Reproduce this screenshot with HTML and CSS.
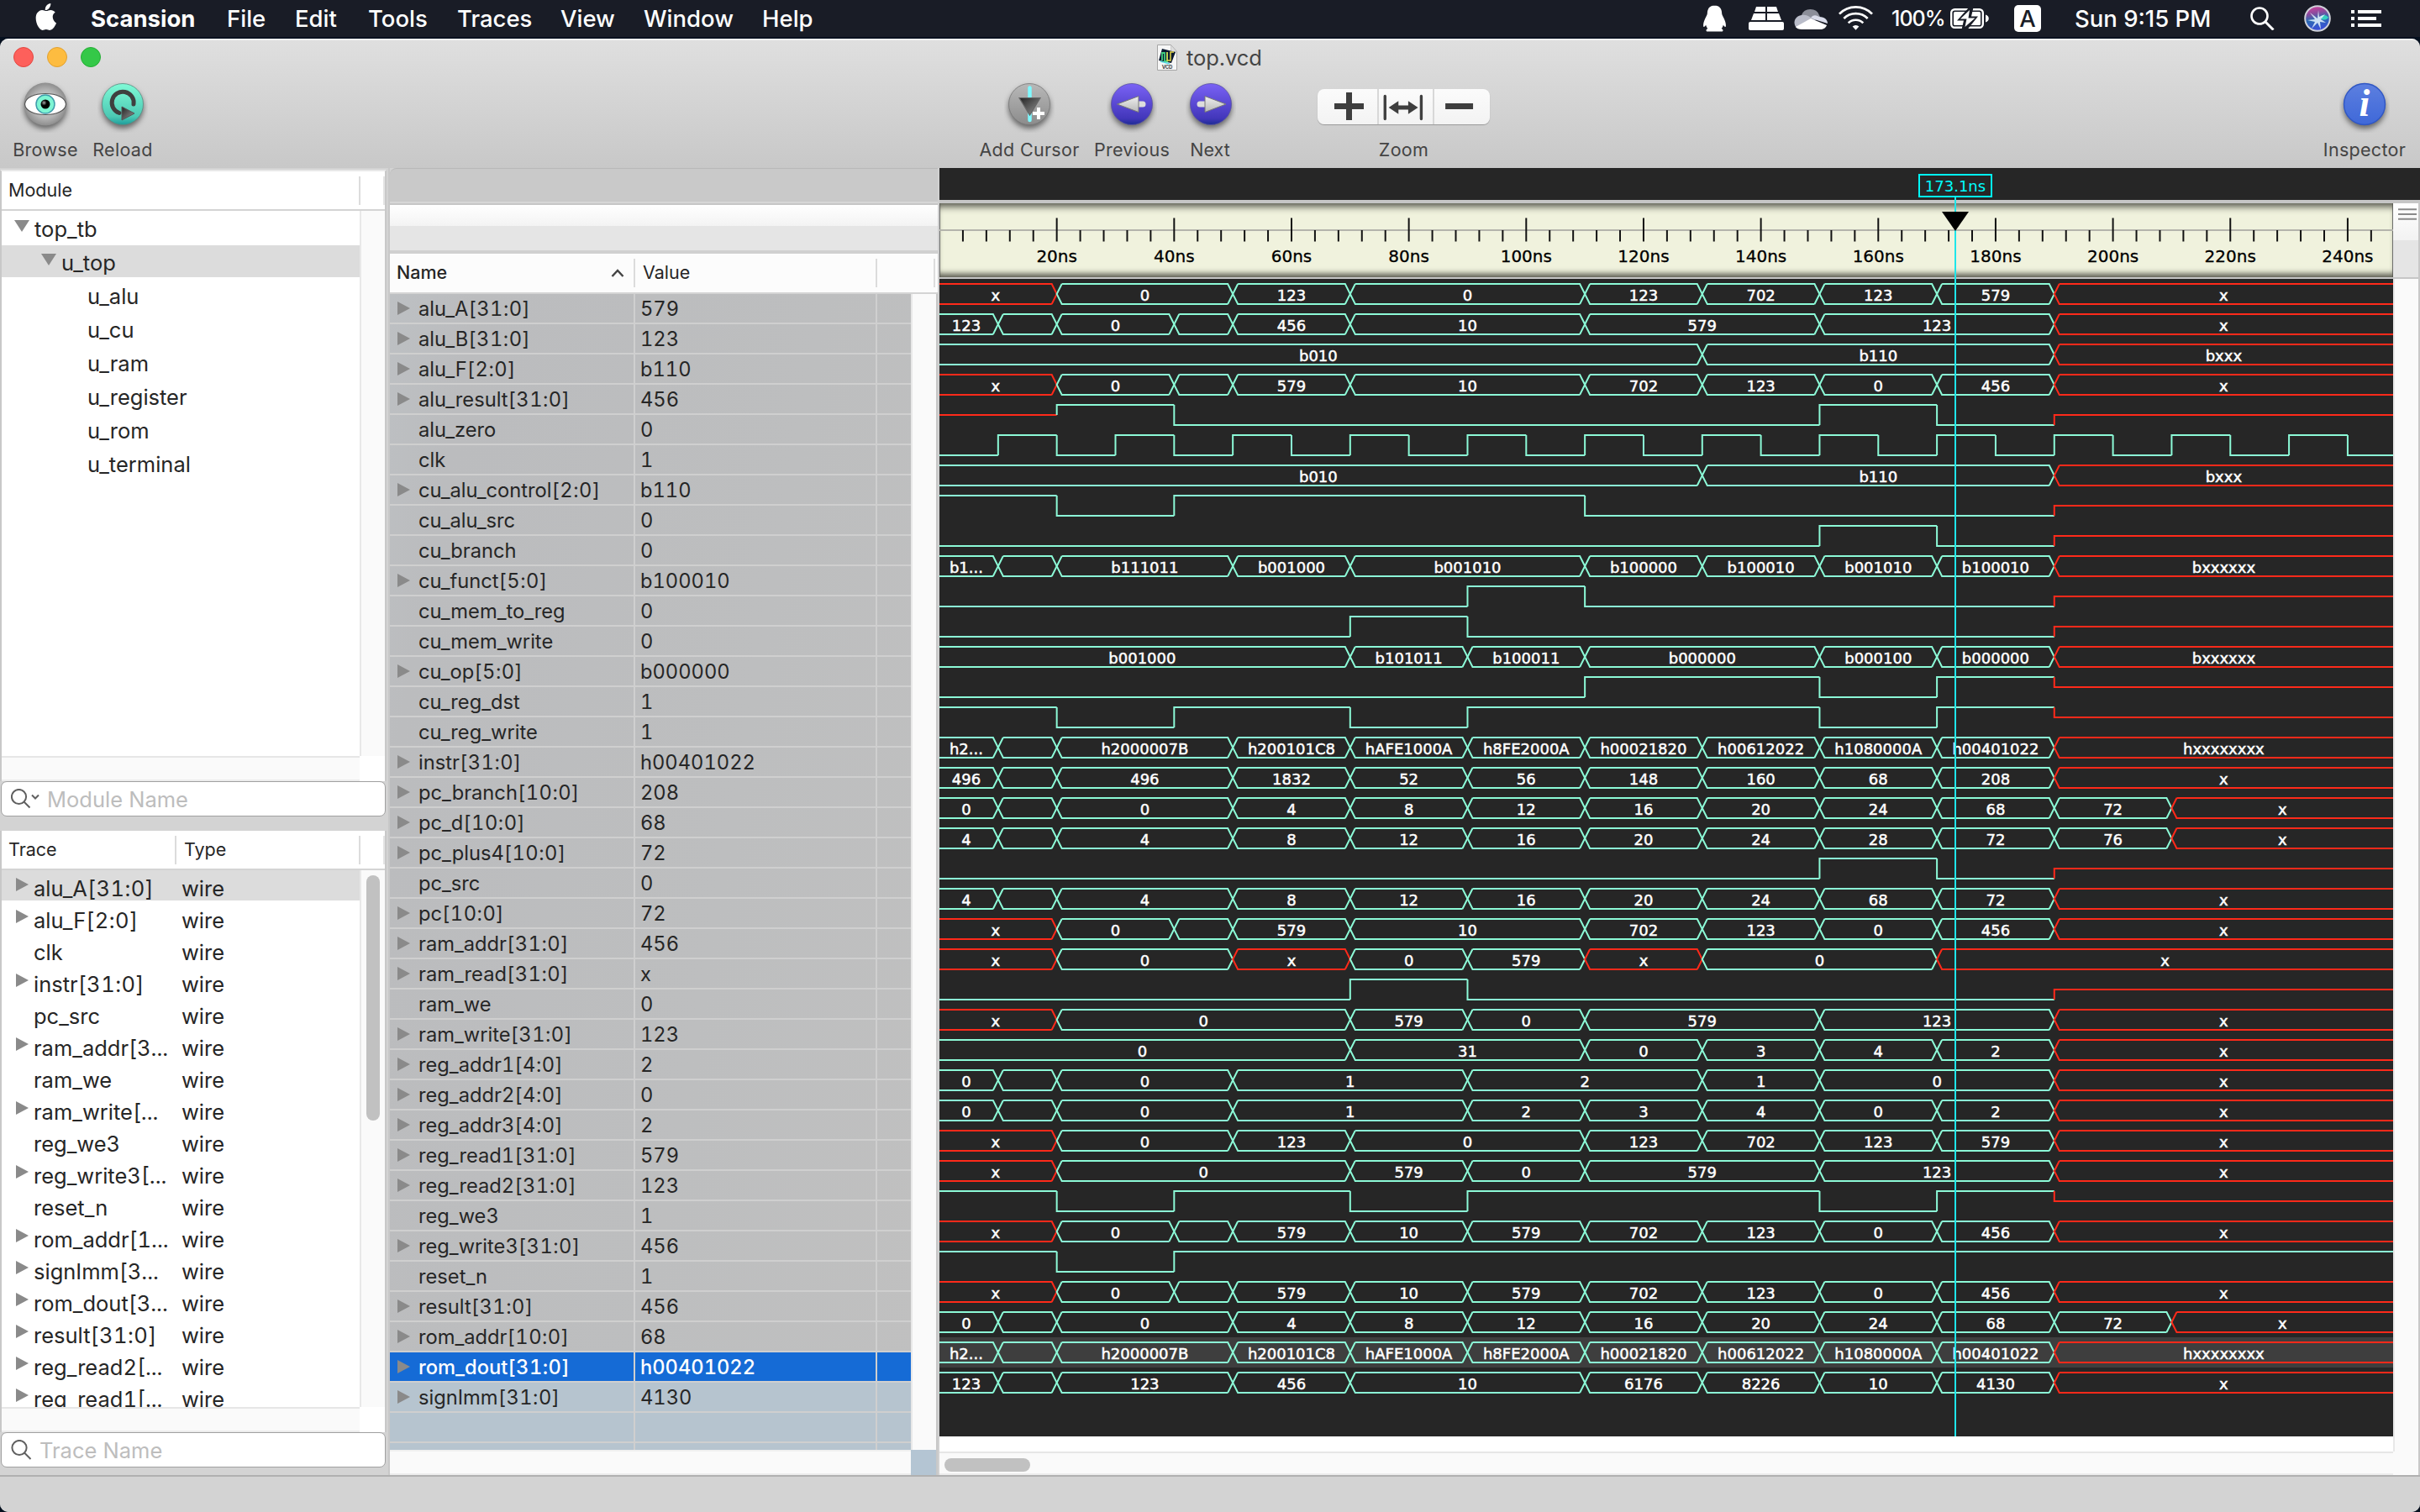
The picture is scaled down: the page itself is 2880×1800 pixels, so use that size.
FILE: index.html
```html
<!DOCTYPE html>
<html lang="en">
<head>
<meta charset="utf-8">
<title>top.vcd</title>
<link rel="stylesheet" href="styles.css">
</head>
<body>
<nav class="menubar">
  <svg class="apple" viewBox="0 0 26 32"><path d="M18.3 0c.3 2.2-.6 4.2-1.8 5.700-1.200 1.400-3 2.400-4.700 2.300-.3-2 .6-4.200 1.700-5.500C14.800 1.100 16.700.1 18.300 0zM25 23.500c-.9 2.100-1.400 3-2.500 4.800-1.600 2.300-3.500 3.600-5.300 3.600-1.700 0-2.200-1-4.300-1s-2.700 1-4.300 1c-1.900 0-3.400-1.600-4.900-3.800C.7 23.500-.6 15.500 2.200 11.600c1.500-2.300 3.700-3.700 5.900-3.700 2.100 0 3.400 1.200 5.100 1.200s2.700-1.200 5.200-1.200c1.900 0 3.900 1 5.300 2.800-4.500 2.600-3.800 9.200 1.300 12.800z"/></svg>
  <span class="menu app-name">Scansion</span>
  <span class="menu m-file">File</span>
  <span class="menu m-edit">Edit</span>
  <span class="menu m-tools">Tools</span>
  <span class="menu m-traces">Traces</span>
  <span class="menu m-view">View</span>
  <span class="menu m-window">Window</span>
  <span class="menu m-help">Help</span>
  <div class="status">
    <svg class="penguin" viewBox="0 0 28 33"><path d="M14 0C8 0 5 4 5 10c-.4 2-1.500 3.500-2.600 6C.6 20-.4 23.500.3 26c.8.8 2-.4 3-2 .4 2 1.200 3.300 2.300 4.500C3.500 29.500 3 31 4.500 32h19c1.500-1 1-2.500-1.100-3.500 1.100-1.200 1.900-2.500 2.300-4.500 1 1.600 2.200 2.800 3 2 .7-2.500-.3-6-2.100-10-1.100-2.500-2.200-4-2.600-6 0-6-3-10-9-10z"/></svg>
    <svg class="bricks" viewBox="0 0 42 28"><path d="M9 0h11v6H7zM22 0h11l2 6H22zM6 8h14v8H3zM22 8h14l3 8H22z"/><rect y="18" width="42" height="10" rx="2"/></svg>
    <svg class="cloud" viewBox="0 0 40 26"><path d="M9 9a11 10 0 0 1 21 0l1 2-12 8z" fill="#8b8e99"/><path d="M9 9c4-.5 7 0 11 3l4 3L3 24C-1 20-1 11 9 9z" fill="#b9bcc9"/><path d="M20 12c4-5 8-2 10-1 7 0 10 4 10 8L24 14z" fill="#d9dcea"/><path d="M2 23l18-10 19 8c-1 3-4 5-8 5H9c-3 0-6-1-7-3z" fill="#fff"/></svg>
    <svg class="wifi" viewBox="0 0 42 29"><g fill="none" stroke="#fff" stroke-width="2.800"><path d="M1 9.500a28 28 0 0 1 40 0M6.500 15a20.500 20.500 0 0 1 29 0M12 20.500a12.800 12.800 0 0 1 18 0"/></g><path d="M21 29l-4-4.200a5.800 5.800 0 0 1 8 0z"/></svg>
    <span class="percent">100%</span>
    <svg class="battery" viewBox="0 0 46 24"><rect x="1.200" y="1.200" width="37.600" height="21.600" rx="4" fill="none" stroke="#fff" stroke-width="2.400"/><rect x="4" y="4" width="32" height="16" rx="1.500"/><path d="M42 7.500c5 1 5 8 0 9z"/><path d="M22 -1L8 14.500h8L13.500 25h7L33 9.500h-8L27.500 -1z" fill="#191c26"/><path d="M23 2L12 12.500h7.500L17.500 22 29.500 11.500h-8z"/></svg>
    <span class="input-source">A</span>
    <span class="clock">Sun 9:15 PM</span>
    <svg class="spotlight" viewBox="0 0 30 28"><circle cx="11" cy="11" r="9.500" fill="none" stroke="#fff" stroke-width="2.600"/><path d="M18 18l9.500 9.500" stroke="#fff" stroke-width="3"/></svg>
    <svg class="siri" viewBox="0 0 32 32">
      <defs><linearGradient id="siriFill" x1="0" y1="0" x2="0.200" y2="1"><stop offset="0" stop-color="#e0409a"/><stop offset=".35" stop-color="#8a4a9e"/><stop offset=".6" stop-color="#2a6ab0"/><stop offset="1" stop-color="#3a4fd8"/></linearGradient></defs>
      <circle cx="16" cy="16" r="14.800" fill="url(#siriFill)" stroke="#cfd2da" stroke-width="2"/>
      <path d="M20 13c4-2 7-1 9 2-3 3-5 3-8 2z" fill="#35d0c0"/><path d="M16 16L7 9l6 8-9 1 9 2-4 8 7-7 4 8-1-9 7 1-6-4 5-6-7 3-1-8z" fill="#e6f6ff" opacity=".85"/>
    </svg>
    <svg class="list" viewBox="0 0 36 20"><path d="M0 0h4v4H0zM0 8h4v4H0zM0 16h4v4H0zM8 0h28v4H8zM8 8h22v4H8zM8 16h28v4H8z"/></svg>
  </div>
</nav>

<main class="window">
  <header class="toolbar">
    <div class="titlebar">
      <i class="light close"></i><i class="light minimize"></i><i class="light maximize"></i>
      <div class="title">
        <svg class="doc" viewBox="0 0 24 31"><path d="M.5.500h16l7 8v22H.5z" fill="#f6f6f6" stroke="#a5a5a5"/><path d="M16.500.500v8h7z" fill="#ddd" stroke="#b5b5b5" stroke-width=".6"/><path d="M6 5l16 4-5 13L2 19z" fill="#0c1a30"/><path d="M6 19V10h3v10h3V9" fill="none" stroke="#40d080" stroke-width="1.800"/><path d="M12 9v10h4V9h4" fill="none" stroke="#e6d84a" stroke-width="1.500"/><path d="M4 20l11 3" stroke="#58d8e0" stroke-width="1.500"/><text x="12" y="29" font-size="6" text-anchor="middle" font-family="Inter" font-weight="700" fill="#444">VCD</text></svg>
        <span>top.vcd</span>
      </div>
    </div>
    <div class="tools">
      <div class="tool t-browse">
        <svg viewBox="0 0 60 64"><defs><radialGradient id="lid" cx=".5" cy=".5" r=".55"><stop offset="0" stop-color="#ddd"/><stop offset=".6" stop-color="#b4b4b4"/><stop offset="1" stop-color="#828282"/></radialGradient><radialGradient id="pupil" cx=".35" cy=".35" r=".6"><stop offset="0" stop-color="#aaa"/><stop offset=".5" stop-color="#000"/></radialGradient></defs>
          <circle class="drop" cx="30" cy="30" r="25.500" fill="url(#lid)"/><path d="M5.500 30C6 22 17 17.500 30 17.500S54 22 54.500 30C54 38 43 42.500 30 42.500S6 38 5.500 30z" fill="#fff" stroke="#555" stroke-width="1.200"/><circle cx="30" cy="30" r="11" fill="#7ef5d3" stroke="#3f9cab" stroke-width="1.500"/><circle cx="30" cy="30" r="5.500" fill="url(#pupil)"/></svg>
        <span>Browse</span></div>
      <div class="tool t-reload">
        <svg viewBox="0 0 60 64"><defs><linearGradient id="mint" x1="0" y1="0" x2="0" y2="1"><stop offset="0" stop-color="#80fad6"/><stop offset=".8" stop-color="#4cc9b4"/><stop offset="1" stop-color="#1d9d9c"/></linearGradient><linearGradient id="dark" x1="0" y1="0" x2="1" y2="1"><stop offset="0" stop-color="#222"/><stop offset="1" stop-color="#999"/></linearGradient></defs>
          <circle class="drop" cx="30" cy="30" r="24.500" fill="url(#mint)" stroke="#5a8a80" stroke-width=".8"/><path d="M43 30A13 13 0 1 0 26 40.500" fill="none" stroke="#3f3f3f" stroke-width="5" stroke-linecap="round"/><path d="M29 33v16l15-8z" fill="url(#dark)" stroke="#555"/></svg>
        <span>Reload</span></div>
      <div class="tool t-cursor">
        <svg viewBox="0 0 60 64"><defs><linearGradient id="steel" x1="0" y1="0" x2="0" y2="1"><stop offset="0" stop-color="#b8b8b8"/><stop offset="1" stop-color="#8c8c8c"/></linearGradient></defs><circle class="drop" cx="30" cy="30" r="24.500" fill="url(#steel)" stroke="#777" stroke-width=".8"/><path d="M30.500 10.500v38.500" stroke="#7ef9ff" stroke-width="4.500" stroke-linecap="round"/><path d="M18 22.500h25L30.500 43z" fill="url(#dark)" stroke="#666" stroke-width="1.200"/><path d="M34 41h14M41 34v14" stroke="#fff" stroke-width="4"/></svg>
        <span>Add Cursor</span></div>
      <div class="tool t-prev">
        <svg viewBox="0 0 60 64"><defs><linearGradient id="violet" x1="0" y1="0" x2="0" y2="1"><stop offset="0" stop-color="#7a62f5"/><stop offset=".85" stop-color="#4236ba"/><stop offset="1" stop-color="#1c2c94"/></linearGradient><linearGradient id="chrome" x1="0" y1="0" x2="0" y2="1"><stop offset="0" stop-color="#efefef"/><stop offset="1" stop-color="#b8b8b8"/></linearGradient></defs><circle class="drop" cx="30" cy="30" r="24.500" fill="url(#violet)" stroke="#5a54a0" stroke-width=".8"/><path d="M37 26.500h6a3.500 3.500 0 0 1 0 7h-6z" fill="#ddd"/><path d="M12.500 30L38 20.500v19z" fill="url(#chrome)" stroke="#777"/></svg>
        <span>Previous</span></div>
      <div class="tool t-next">
        <svg viewBox="0 0 60 64"><circle class="drop" cx="30" cy="30" r="24.500" fill="url(#violet)" stroke="#5a54a0" stroke-width=".8"/><path d="M23 26.500h-6a3.500 3.500 0 0 0 0 7h6z" fill="#ddd"/><path d="M48 30L23 20.500v19z" fill="url(#chrome)" stroke="#777"/></svg>
        <span>Next</span></div>
      <div class="tool t-zoom">
        <div class="segments">
          <svg viewBox="0 0 71 42"><path d="M20 17h14V4h7v13h14v7H41v13h-7V24H20z" fill="#3e3e3e"/></svg>
          <svg viewBox="0 0 66 42"><path d="M7.500 8v28M52 8v28" stroke="#404040" stroke-width="3.500" stroke-linecap="round"/><path d="M12 22l12-8v5.500h12V14l12 8-12 8v-5.500H24V30z" fill="#3e3e3e"/></svg>
          <svg viewBox="0 0 66 42"><path d="M13.500 17h34v7h-34z" fill="#3e3e3e"/></svg>
        </div>
        <span>Zoom</span></div>
      <div class="tool t-inspector">
        <svg viewBox="0 0 60 64"><defs><linearGradient id="azure" x1="0" y1="0" x2="0" y2="1"><stop offset="0" stop-color="#5c7fe0"/><stop offset="1" stop-color="#3f68d8"/></linearGradient></defs><circle class="drop" cx="30" cy="30" r="24.500" fill="url(#azure)" stroke="#2f56c4" stroke-width="1.400"/><text x="30" y="44" text-anchor="middle" font-family="Liberation Serif, serif" font-style="italic" font-weight="700" font-size="46" fill="#fff">i</text></svg>
        <span>Inspector</span></div>
    </div>
  </header>

  <div class="panes">
    <aside class="sidebar">
      <section class="box module-box">
        <div class="thead"><span class="th th-module">Module</span><span class="th th-end"></span></div>
        <div class="scroll-area">
          <ul class="tree">
            <li class="lvl0"><i class="tri down"></i>top_tb</li>
            <li class="lvl1 current"><i class="tri down"></i>u_top</li>
            <li class="lvl2">u_alu</li><li class="lvl2">u_cu</li><li class="lvl2">u_ram</li>
            <li class="lvl2">u_register</li><li class="lvl2">u_rom</li><li class="lvl2">u_terminal</li>
          </ul>
          <div class="vtrack"></div>
          <div class="htrack"></div><div class="corner"></div>
        </div>
      </section>
      <div class="search"><svg class="lens with-menu" viewBox="0 0 34 24"><circle cx="9.500" cy="9.500" r="8.600"/><path d="M15.500 15.500l7 7M25 7.500l4 4 4-4"/></svg>Module Name</div>
      <section class="box trace-box">
        <div class="thead"><span class="th th-trace">Trace</span><span class="th th-type">Type</span><span class="th th-end"></span></div>
        <div class="scroll-area">
          <ul class="traces" id="traces"></ul>
          <div class="vtrack"><i class="vthumb"></i></div>
          <div class="htrack"></div><div class="corner"></div>
        </div>
      </section>
      <div class="search"><svg class="lens" viewBox="0 0 25 24"><circle cx="10" cy="9.500" r="8.600"/><path d="M16 15.500l7.500 7.500"/></svg>Trace Name</div>
    </aside>

    <section class="signals">
      <div class="blank-head"></div>
      <div class="white-strip"></div>
      <div class="grey-strip"></div>
      <div class="thead"><span class="th th-name">Name<svg class="sort" viewBox="0 0 16 10"><path d="M1.500 9L8 2l6.500 7"/></svg></span><span class="th th-value">Value</span><span class="th th-rest"></span><span class="th th-end"></span></div>
      <div class="scroll-area">
        <div class="sig-rows" id="signals"></div>
        <div class="vtrack"></div>
        <div class="htrack"></div><div class="corner"></div>
      </div>
    </section>

    <section class="waves">
      <div class="cursor-bar"></div>
      <div class="ruler-row">
        <svg class="ruler" id="ruler" viewBox="0 0 1730 88"></svg>
        <div class="ruler-side"><svg viewBox="0 0 22 14"><path d="M0 1.200h22M0 7h22M0 12.800h22" stroke="#8a8a8a" stroke-width="2"/></svg></div>
      </div>
      <div class="wave-body">
        <svg class="plot" id="plot" viewBox="0 0 1730 1378"></svg>
        <div class="vtrack"></div>
        <div class="plot-foot"></div>
        <div class="htrack"><i class="hthumb"></i></div><div class="corner"></div>
      </div>
      <div class="cursor">
        <span class="cursor-label">173.1ns</span>
        <svg class="cursor-mark" viewBox="0 0 32 24"><path d="M0 0h32L16 23z"/></svg>
      </div>
    </section>
  </div>
  <footer class="statusbar"></footer>
</main>
<script src="waves.js"></script>
</body>
</html>
```
FILE: styles.css
```css
* { box-sizing: border-box; margin: 0; padding: 0; }
html, body { width: 2880px; height: 1800px; overflow: hidden; }
body { background: #06101f; font-family: Inter, "Liberation Sans", sans-serif; color: #262626; display: flex; flex-direction: column; }
ul { list-style: none; }
svg { display: block; flex: none; }
i { display: block; }

/* Menu bar */
.menubar { height: 44px; flex: none; background: #191c26; color: #fff; display: flex; align-items: center; padding-left: 42px; margin-bottom: 2px; font-size: 27.5px; font-weight: 500; line-height: 44px; position: relative; }
.menubar svg { fill: #fff; }
.apple { width: 26px; height: 32px; margin-top: -4px; margin-right: 40px; }
.menu { flex: none; white-space: nowrap; }
.app-name { width: 162px; font-weight: 700; }
.m-file { width: 81px; }
.m-edit { width: 87px; }
.m-tools { width: 106px; }
.m-traces { width: 123px; }
.m-view { width: 99px; }
.m-window { width: 141px; }
.status { display: flex; align-items: center; margin-left: auto; padding-right: 46px; }
.penguin { width: 27px; height: 33px; margin-right: 27px; }
.bricks { width: 42px; height: 28px; margin-right: 12px; }
.cloud { width: 40px; height: 26px; margin-right: 13px; }
.wifi { width: 41px; height: 29px; margin-right: 22px; margin-top: -2px; }
.percent { width: 70px; font-size: 25px; letter-spacing: -1px; }
.battery { width: 46px; height: 24px; margin-right: 30px; }
.input-source { width: 32px; height: 32px; border-radius: 5px; background: #fff; color: #191c26; text-align: center; line-height: 32px; margin-right: 40px; }
.clock { width: 209px; white-space: nowrap; }
.spotlight { width: 30px; height: 28px; margin-right: 34px; }
.siri { width: 32px; height: 32px; margin-right: 24px; }
.list { width: 36px; height: 20px; }

/* Window */
.window { flex: 1; display: flex; flex-direction: column; min-height: 0; border-radius: 10px; overflow: hidden; background: #d3d3d3; }
.toolbar { height: 154px; flex: none; background: linear-gradient(#dfdfdf, #c8c8c8); border-top: 2px solid #f0f0f0; display: flex; flex-direction: column; color: #444; }
.titlebar { height: 40px; display: flex; align-items: center; padding-left: 16px; }
.light { width: 24px; height: 24px; border-radius: 50%; margin-right: 16px; border: 1px solid; }
.close { background: #fd605b; border-color: #e24640; }
.minimize { background: #fdbc40; border-color: #e0a030; }
.maximize { background: #34c848; border-color: #25ad35; }
.title { display: flex; align-items: center; margin-left: 1241px; font-size: 25.5px; line-height: 40px; gap: 11px; padding-top: 1px; letter-spacing: -.1px; }
.doc { width: 24px; height: 31px; margin-top: -1px; }
.tools { display: flex; flex: 1; padding-left: 15px; }
.tool { display: flex; flex-direction: column; align-items: center; flex: none; padding-top: 6px; font-size: 21.5px; white-space: nowrap; }
.tool > svg { width: 60px; height: 64px; }
.tool > span { line-height: 28px; margin-top: 6px; letter-spacing: .3px; }
.drop { filter: drop-shadow(0 4px 3px rgba(0, 0, 0, .5)); }
.t-browse { width: 78px; margin-right: 17px; }
.t-reload { width: 72px; margin-right: 984px; }
.t-cursor { width: 118px; margin-right: 18px; }
.t-prev { width: 90px; margin-right: 24px; }
.t-next { width: 50px; margin-right: 102px; }
.t-next > span { letter-spacing: 0; margin-left: -2px; }
.t-zoom { width: 205px; }
.t-inspector { width: 100px; margin-left: auto; margin-right: 16px; }
.segments { display: flex; width: 205px; height: 42px; margin: 12px 0 10px; border-radius: 8px; background: linear-gradient(#fbfbfb, #f3f3f3); box-shadow: 0 1px 1px #9a9a9a; }
.segments svg { height: 42px; width: 66px; border-left: 2px solid #d8d8d8; }
.segments svg:first-child { width: 71px; border: 0; }
.panes { display: flex; height: 1558px; flex: none; border-bottom: 2px solid #b0b0b0; }
.statusbar { flex: 1; background: #d3d3d3; }

/* Shared table pieces */
.thead { display: flex; background: #fff; height: 47px; flex: none; border-bottom: 2px solid #d4d4d4; font-size: 21.5px; line-height: 44px; }
.th { position: relative; height: 34px; margin-top: 6px; border-right: 2px solid #dcdcdc; line-height: 33px; flex: none; }
.th-end { flex: 1; border-color: #e4e4e4; }
.scroll-area { flex: 1; min-height: 0; display: grid; grid-template-columns: 1fr 30px; grid-template-rows: 1fr 30px; }
.vtrack { background: #fafafa; border-left: 2px solid #e8e8e8; }
.htrack { background: #fafafa; border-top: 2px solid #e6e6e6; border-bottom: 2px solid #ececec; }
.corner { background: #fff; }
.tri { width: 0; height: 0; flex: none; border: solid transparent; }
.tri.down { border-width: 14px 9px 0; border-top-color: #8a8a8a; }
.tri.right { border-width: 8.5px 0 8.5px 15px; border-left-color: #8a8a8a; }

/* Sidebar */
.sidebar { width: 462px; flex: none; background: #d3d3d3; padding-top: 2px; display: flex; flex-direction: column; }
.box { width: 460px; border-left: 2px solid #c8c8c8; border-right: 2px solid #c8c8c8; display: flex; flex-direction: column; }
.module-box { height: 728px; background: #fff; border-top: 2px solid #e8e8e8; }
.trace-box { height: 716px; background: #fff; margin-top: 17px; }
.th-module { width: 427px; padding-left: 8px; }
.th-trace { width: 208px; padding-left: 8px; }
.th-type { width: 219px; padding-left: 9px; }
.tree, .traces { overflow: hidden; min-height: 0; font-size: 25.5px; }
.tree { padding-top: 1px; }
.tree li { height: 40px; line-height: 42px; display: flex; background-clip: padding-box; border-bottom: 2px solid transparent; }
.tree .tri { margin-top: 10px; margin-right: 6px; }
.tree .current { background-color: #dcdcdc; }
.lvl0 { padding-left: 15px; }
.lvl1 { padding-left: 47px; }
.lvl2 { padding-left: 102px; }
.traces { font-feature-settings: "tnum"; }
.traces li { height: 38px; line-height: 43px; display: flex; background-clip: padding-box; border-bottom: 2px solid transparent; }
.traces li:first-child { background-color: #dcdcdc; }
.traces .mark { width: 21px; margin-left: 17px; padding-top: 9px; flex: none; }
.traces .nm { width: 176px; white-space: nowrap; flex: none; }
.vtrack .vthumb { width: 16px; height: 292px; margin: 6px 0 0 6px; border-radius: 8px; background: #c1c1c1; }
.search { height: 42px; width: 458px; margin-left: 1px; flex: none; background: #fff; border: 1.500px solid #a0a0a0; border-radius: 7px; display: flex; align-items: center; color: #bdbdbd; font-size: 25.5px; padding-left: 11px; }
.lens { width: 25px; height: 24px; fill: none; stroke: #606060; stroke-width: 2; margin-right: 9px; }
.lens.with-menu { width: 34px; }

/* Signal list */
.signals { width: 656px; flex: none; border-left: 2px solid #c8c8c8; border-right: 2px solid #d0d0d0; display: flex; flex-direction: column; }
.signals .thead { background: #fcfcfc; height: 48px; }
.blank-head { height: 44px; background: #c9c9c9; border-top: 1px solid #b8b8b8; border-bottom: 2px solid #c6c6c6; box-shadow: inset 0 -2px #d6d6d6; flex: none; border-top-left-radius: 8px; }
.white-strip { height: 25px; background: linear-gradient(#fff, #f3f3f3); flex: none; }
.grey-strip { height: 33px; background: #e5e5e5; border-bottom: 4px solid #d0d0d0; flex: none; }
.th-name { width: 292px; padding-left: 8px; font-weight: 500; }
.th-value { width: 288px; padding-left: 9px; }
.th-rest { width: 69px; }
.signals .th-end { border: 0; }
.signals .scroll-area { grid-template-columns: 1fr 32px; }
.signals .vtrack, .signals .corner { border-right: 2px solid #c8c8c8; }
.sort { width: 16px; height: 10px; fill: none; stroke: #444; stroke-width: 2.500; position: absolute; right: 11px; top: 12px; }
.sig-rows { overflow: hidden; min-height: 0; font-size: 23.700px; line-height: 35px; background: linear-gradient(100deg, #bdc0c3 0, #bbbcbe 12%, #bdbebf 60%, #c0c0c0 100%); font-feature-settings: "tnum"; }
.sig { height: 36px; display: grid; grid-template-columns: 292px 288px 1fr; border-bottom: 2px solid #cfcfcf; }
.sig > span { border-right: 2px solid #cfcfcf; white-space: nowrap; display: flex; }
.sig > span:last-child { border: 0; }
.sig .mark { width: 25px; margin-left: 9px; padding-top: 9px; flex: none; }
.sig .val { padding-left: 6px; }
.bits { letter-spacing: .5px; }
.sig.cool { background: #b6c4cf; }
.sig.active { background: #156bd6; color: #fff; font-weight: 500; }
.signals .corner { background: #b4c5d3; }
.signals .htrack { border-top-color: #f0f0f0; }

/* Waveforms */
.waves { flex: 1; min-width: 0; display: flex; flex-direction: column; border-right: 2px solid #c8c8c8; position: relative; }
.cursor-bar { height: 38px; flex: none; background: #262626; margin-right: -2px; }
.ruler-row { height: 94px; flex: none; border-top: 4px solid #c6c6c6; border-bottom: 2px solid #c6c6c6; display: grid; grid-template-columns: 1730px 1fr; }
.ruler { width: 1730px; height: 88px; background: #f0f2dd; box-shadow: inset 0 9px 8px -5px #55564c, inset 0 -8px 7px -4px #55564c, inset 1px 0 #777, inset -1px 0 #777; }
.ruler-side { background: linear-gradient(#fff 0, #f2f2f2 44px, #e5e5e5 44px); padding: 6px 0 0 6px; }
.ruler-side svg { width: 22px; height: 14px; }
.ruler text { font: 20px "DejaVu Sans", sans-serif; text-anchor: middle; fill: #000; stroke: #000; stroke-width: .3px; }
.wave-body { flex: 1; display: grid; grid-template-columns: 1730px 30px; grid-template-rows: 1378px 18px 28px; }
.plot { width: 1730px; height: 1378px; background: #262626; }
.plot text { font: 18px "DejaVu Sans", sans-serif; text-anchor: middle; fill: #fff; stroke: #fff; stroke-width: .5px; }
.plot path { fill: none; stroke-width: 2; }
.known { stroke: #8cfad7; }
.unknown { stroke: #ff2a1a; }
.wave-body .vtrack { grid-row: 1 / 3; grid-column: 2; }
.plot-foot { background: #fff; }
.hthumb { width: 102px; height: 16px; margin: 6px 0 0 6px; border-radius: 8px; background: #c1c1c1; }
.wave-body .corner { background: #fafafa; }
.cursor { position: absolute; left: 1165px; top: 7px; width: 88px; height: 1503px; }
.cursor::before { content: ""; position: absolute; left: 43px; top: 28px; bottom: 0; width: 2px; background: #1fe6ea; }
.cursor-label { display: block; height: 28px; border: 2px solid #00f6f6; color: #0ff; font: 18px/25px "DejaVu Sans", sans-serif; text-align: center; background: #262626; }
.cursor-mark { position: absolute; left: 28px; top: 45px; width: 32px; height: 24px; }
```
FILE: waves.js
```js
// Pixels per nanosecond on the time axis.
const SCALE = 6.983;
const WIDTH = 1730;
const ROW = 36;

const aluA = 'x@20 0@50 123@70 0@110 123@130 702@150 123@170 579@190 x';
const aluF = 'b010@130 b110@190 bxxx';
const aluResult = 'x@20 0@40 _@50 579@70 10@110 702@130 123@150 0@170 456@190 x';
const regWrite = '1@20 0@40 1@70 0@90 1@150 0@170 1@190 x';
const instr = 'h2...@10 _@20 h2000007B@50 h200101C8@70 hAFE1000A@90 h8FE2000A@110 h00021820@130 h00612022@150 h1080000A@170 h00401022@190 hxxxxxxxx';
const pcD = '0@10 _@20 0@50 4@70 8@90 12@110 16@130 20@150 24@170 68@190 72@210 x';
const ramWrite = 'x@20 0@70 579@90 0@110 579@150 123@190 x';
const result = 'x@20 0@40 _@50 579@70 10@90 579@110 702@130 123@150 0@170 456@190 x';
let clk = '';
for (let t = 10; t <= 240; t += 10) clk += (t / 10 % 2 ? 0 : 1) + '@' + t + ' ';
clk += '0';

const signals = [
  ['alu_A[31:0]', '579', aluA],
  ['alu_B[31:0]', '123', '123@10 _@20 0@40 _@50 456@70 10@110 579@150 123@190 x'],
  ['alu_F[2:0]', 'b110', aluF],
  ['alu_result[31:0]', '456', aluResult],
  ['alu_zero', '0', 'x@20 1@40 0@150 1@170 0@190 x'],
  ['clk', '1', clk],
  ['cu_alu_control[2:0]', 'b110', aluF],
  ['cu_alu_src', '0', '1@20 0@40 1@110 0@190 x'],
  ['cu_branch', '0', '0@150 1@170 0@190 x'],
  ['cu_funct[5:0]', 'b100010', 'b1...@10 _@20 b111011@50 b001000@70 b001010@110 b100000@130 b100010@150 b001010@170 b100010@190 bxxxxxx'],
  ['cu_mem_to_reg', '0', '0@90 1@110 0@190 x'],
  ['cu_mem_write', '0', '0@70 1@90 0@190 x'],
  ['cu_op[5:0]', 'b000000', 'b001000@70 b101011@90 b100011@110 b000000@150 b000100@170 b000000@190 bxxxxxx'],
  ['cu_reg_dst', '1', '0@110 1@150 0@170 1@190 x'],
  ['cu_reg_write', '1', regWrite],
  ['instr[31:0]', 'h00401022', instr],
  ['pc_branch[10:0]', '208', '496@10 _@20 496@50 1832@70 52@90 56@110 148@130 160@150 68@170 208@190 x'],
  ['pc_d[10:0]', '68', pcD],
  ['pc_plus4[10:0]', '72', '4@10 _@20 4@50 8@70 12@90 16@110 20@130 24@150 28@170 72@190 76@210 x'],
  ['pc_src', '0', '0@150 1@170 0@190 x'],
  ['pc[10:0]', '72', '4@10 _@20 4@50 8@70 12@90 16@110 20@130 24@150 68@170 72@190 x'],
  ['ram_addr[31:0]', '456', aluResult],
  ['ram_read[31:0]', 'x', 'x@20 0@50 x@70 0@90 579@110 x@130 0@170 x'],
  ['ram_we', '0', '0@70 1@90 0@190 x'],
  ['ram_write[31:0]', '123', ramWrite],
  ['reg_addr1[4:0]', '2', '0@70 31@110 0@130 3@150 4@170 2@190 x'],
  ['reg_addr2[4:0]', '0', '0@10 _@20 0@50 1@90 2@130 1@150 0@190 x'],
  ['reg_addr3[4:0]', '2', '0@10 _@20 0@50 1@90 2@110 3@130 4@150 0@170 2@190 x'],
  ['reg_read1[31:0]', '579', aluA],
  ['reg_read2[31:0]', '123', ramWrite],
  ['reg_we3', '1', regWrite],
  ['reg_write3[31:0]', '456', result],
  ['reset_n', '1', '1@20 0@40 1'],
  ['result[31:0]', '456', result],
  ['rom_addr[10:0]', '68', pcD],
  ['rom_dout[31:0]', 'h00401022', instr],
  ['signImm[31:0]', '4130', '123@10 _@20 123@50 456@70 10@110 6176@130 8226@150 10@170 4130@190 x'],
];
const SELECTED = 35;

const traces = ['alu_A[31:0]', 'alu_F[2:0]', 'clk', 'instr[31:0]', 'pc_src', 'ram_addr[3...', 'ram_we',
  'ram_write[...', 'reg_we3', 'reg_write3[...', 'reset_n', 'rom_addr[1...', 'signImm[3...', 'rom_dout[3...',
  'result[31:0]', 'reg_read2[...', 'reg_read1[...'];

const mark = name => '<span class="mark">' + (name.includes('[') ? '<i class="tri right"></i>' : '') + '</span>';
// The bus range, such as [31:0], is set slightly looser than the name.
const label = name => name.replace(/\[\d.*\]$/, range => `<span class="bits">${range}</span>`);

document.getElementById('traces').innerHTML = traces.map(n =>
  `<li>${mark(n)}<span class="nm">${label(n)}</span><span>wire</span></li>`).join('');

document.getElementById('signals').innerHTML = signals.concat([['', ''], ['', '']]).map(([n, v], i) => {
  const cls = i === SELECTED ? ' active' : i > SELECTED ? ' cool' : '';
  return `<div class="sig${cls}"><span>${mark(n)}${label(n)}</span><span class="val">${v}</span><span></span></div>`;
}).join('');

function segments(spec) {
  let start = 0;
  return spec.trim().split(/\s+/).map(part => {
    const [value, end] = part.split('@');
    const seg = { value, from: start, to: end ? end * SCALE : WIDTH, last: !end };
    start = seg.to;
    return seg;
  });
}

function drawBus(segs, top) {
  const hi = top + 6, lo = top + 30, mid = top + 18;
  return segs.map((s, i) => {
    const cls = s.value.includes('x') ? 'unknown' : 'known';
    const a = s.from + (i ? 6 : 0), b = s.to - (s.last ? 0 : 6);
    let d = `M${a} ${hi}H${b}` + (s.last ? '' : `L${s.to} ${mid}L${b} ${lo}`);
    d += `M${b} ${lo}H${a}` + (i ? `L${s.from} ${mid}L${a} ${hi}` : '');
    const x = (s.from + s.to) / 2 - (i ? 0 : 3);
    const text = s.value === '_' ? '' : `<text x="${x}" y="${top + 25.5}">${s.value}</text>`;
    return `<path class="${cls}" d="${d}"/>${text}`;
  }).join('');
}

function drawBit(segs, top) {
  const level = { 0: top + 30, 1: top + 6, x: top + 18 };
  return segs.map((s, i) => {
    const y = level[s.value];
    const lead = i ? `M${s.from} ${level[segs[i - 1].value]}V${y}` : `M0 ${y}`;
    return `<path class="${s.value === 'x' ? 'unknown' : 'known'}" d="${lead}H${s.to}"/>`;
  }).join('');
}

document.getElementById('plot').innerHTML =
  `<rect y="${SELECTED * ROW}" width="${WIDTH}" height="${ROW}" fill="#3e3e3e"/>` +
  signals.map(([name, , spec], i) => (name.includes('[') ? drawBus : drawBit)(segments(spec), i * ROW)).join('');

let ruler = `<path d="M0 32H${WIDTH}" stroke="#b4b4ac" stroke-width="2"/>`;
for (let t = 4; t < 248; t += 4) {
  const x = t * SCALE, major = t % 20 === 0;
  ruler += `<path d="M${x} ${major ? 17.500 : 32}V45.500" stroke="#111" stroke-width="2"/>`;
  if (major) ruler += `<text x="${x}" y="70">${t}ns</text>`;
}
document.getElementById('ruler').innerHTML = ruler;
```
